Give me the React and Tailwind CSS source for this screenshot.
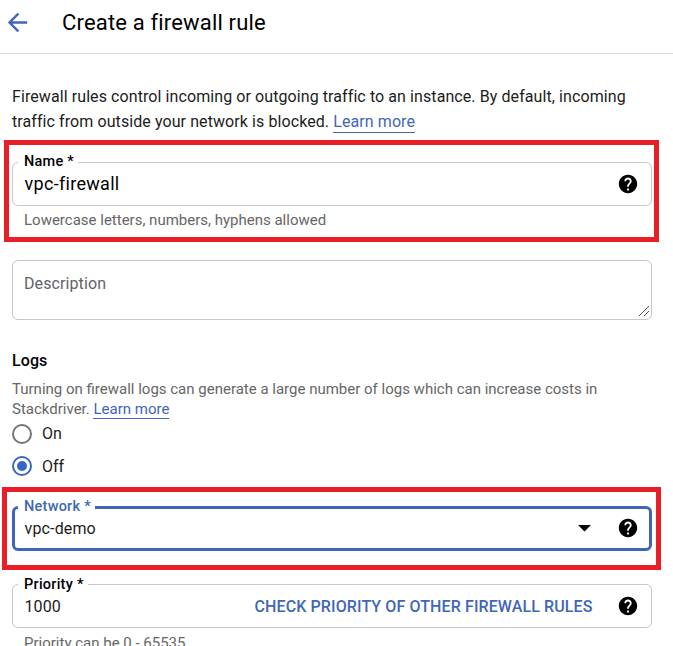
import { useState } from "react";
import clsx from "clsx";
import { MdArrowBack, MdArrowDropDown, MdHelp } from "react-icons/md";

const LearnMore = ({ className }) => (
  <a href="#" className={clsx("text-[#3f66b8] border-b border-[#3f66b8]", className)}>
    Learn more
  </a>
);

// Outlined box with the label sitting on its top border
const Field = ({ label, active, labelClass, children }) => (
  <div
    className={clsx(
      "relative flex items-center rounded-md bg-white",
      active
        ? "h-[45px] border-3 border-[#4067b7] pl-[9.5px] pr-[10.5px] pb-px"
        : "h-[44px] border border-[#c8c8c8] pl-[11.5px] pr-[12.5px]"
    )}
  >
    <label
      className={clsx(
        "absolute bg-white pl-[6px] pr-1 text-[14.5px] leading-4 font-medium tracking-[0.25px] whitespace-nowrap",
        active ? "left-[3px] text-[#4067b7]" : "left-[5px] text-black",
        labelClass
      )}
    >
      {label} *
    </label>
    {children}
    <MdHelp size={22} className="shrink-0 text-black" />
  </div>
);

const Radio = ({ label, checked, onChange }) => (
  <label className="flex items-center gap-[10px] h-5 text-[16px] leading-5 cursor-pointer">
    <input type="radio" name="logs" className="sr-only" checked={checked} onChange={onChange} />
    <span
      className={clsx(
        "flex items-center justify-center w-5 h-5 rounded-full border-2",
        checked ? "border-[#3b66c0]" : "border-[#757575]"
      )}
    >
      {checked && <span className="w-[10px] h-[10px] rounded-full bg-[#3564cc]" />}
    </span>
    <span className={clsx(checked && "pt-[2px]")}>{label}</span>
  </label>
);

const App = () => {
  const [logs, setLogs] = useState("Off");

  return (
    <div className="w-full h-[646px] overflow-hidden bg-white text-[#1c1c1c] font-['Roboto',sans-serif]">
      <header className="flex items-center h-[54px] pb-[8px] pl-[2.5px] border-b border-[#dcdcdc]">
        <MdArrowBack size={29} className="text-[#3f66c0]" />
        <h1 className="ml-[30.5px] text-[22px] leading-7 text-black tracking-[0.17px]">
          Create a firewall rule
        </h1>
      </header>

      <p className="ml-3 mt-[30px] h-[56px] text-[16px] leading-[25px] tracking-[0.085px] whitespace-nowrap">
        Firewall rules control incoming or outgoing traffic to an instance. By default, incoming
        <br />
        traffic from outside your network is blocked. <LearnMore className="pb-px" />
      </p>

      <section className="ml-1 w-[655px] h-[102px] border-5 border-[#e81f27] pt-[17px] pl-[3px] pr-[2px]">
        <Field label="Name" labelClass="-top-[9px]">
          <span className="flex-1 pb-[2px] text-[18px] text-black tracking-[0.3px]">
            vpc-firewall
          </span>
        </Field>
        <p className="ml-3 mt-1 text-[15px] leading-5 text-[#666]">
          Lowercase letters, numbers, hyphens allowed
        </p>
      </section>

      <div className="relative ml-3 mt-[18px] w-[640px] h-[60px] rounded-md border border-[#c8c8c8]">
        <p className="pl-[11px] pt-[13px] text-[16px] leading-5 text-[#5f6368] tracking-[0.1px]">
          Description
        </p>
        <svg
          className="absolute right-[2px] bottom-[2px]"
          width="11"
          height="11"
          stroke="#555"
          shapeRendering="crispEdges"
        >
          <path d="M0.5 10.5l10-10M5.5 10.5l5-5" />
        </svg>
      </div>

      <section className="ml-3 mt-[31px] h-[136px]">
        <h2 className="text-[16px] leading-5 font-medium text-black tracking-[0.1px]">Logs</h2>
        <p className="mt-[8px] text-[15px] leading-5 text-[#666] whitespace-nowrap">
          Turning on firewall logs can generate a large number of logs which can increase costs in
          <br />
          Stackdriver. <LearnMore />
        </p>
        <div className="mt-[5px] flex flex-col gap-3">
          {["On", "Off"].map((value) => (
            <Radio
              key={value}
              label={value}
              checked={logs === value}
              onChange={() => setLogs(value)}
            />
          ))}
        </div>
      </section>

      <section className="ml-[2px] w-[659px] h-[83px] border-5 border-[#e81f27] pt-[14px] pl-[5px] pr-1">
        <Field label="Network" active labelClass="-top-[10px]">
          <span className="flex-1 pt-[2px] text-[16px] tracking-[0.15px]">vpc-demo</span>
          <MdArrowDropDown size={31} className="mr-[16.5px] mb-px text-black" />
        </Field>
      </section>

      <section className="ml-3 mt-[14px] w-[640px]">
        <Field label="Priority" labelClass="-top-[8px]">
          <span className="flex-1 pt-px text-[16px] tracking-[0.1px]">1000</span>
          <button className="mr-6 pt-px text-[16px] font-medium text-[#4067b7] tracking-[0.11px]">
            CHECK PRIORITY OF OTHER FIREWALL RULES
          </button>
        </Field>
        <p className="ml-3 mt-[5px] text-[15px] leading-5 text-[#666]">Priority can be 0 - 65535</p>
      </section>
    </div>
  );
};

export default App;
